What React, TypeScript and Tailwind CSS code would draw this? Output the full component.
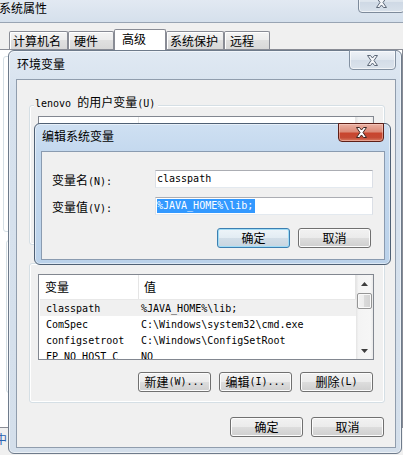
import React from "react";

const CJK = "font-['Noto_Sans_CJK_SC',sans-serif]";

function M({ children, className = "" }: { children: React.ReactNode; className?: string }) {
  return <span className={`font-['DejaVu_Sans_Mono',monospace] text-[10px] ${className}`}>{children}</span>;
}

function XGlyph({ fill, stroke }: { fill: string; stroke: string }) {
  return (
    <svg width="13" height="11" viewBox="0 0 13 11">
      <path
        d="M1.5 0.5 h3 l2 2.5 l2 -2.5 h3 l-3.5 5 l3.5 5 h-3 l-2 -2.5 l-2 2.5 h-3 l3.5 -5 z"
        fill={fill}
        stroke={stroke}
        strokeWidth="1"
        strokeLinejoin="round"
      />
    </svg>
  );
}

function Btn({ children, def = false }: { children: React.ReactNode; def?: boolean }) {
  return (
    <div
      className={`h-[20px] w-[73px] shrink-0 rounded-[3px] border flex items-center justify-center leading-[12px] ${
        def
          ? "border-[#3c7fb1] bg-[linear-gradient(#edf4f9,#e2ecf3_50%,#d2dee8_50%,#c8d5e0)] shadow-[inset_0_0_0_1px_#9fdcf6]"
          : "border-[#707070] bg-[linear-gradient(#f2f2f2,#ebebeb_50%,#dddddd_50%,#cfcfcf)] shadow-[inset_0_0_0_1px_#fcfcfc]"
      }`}
    >
      {children}
    </div>
  );
}

function ScrollBar() {
  return (
    <div className="w-[17px] h-full shrink-0 flex flex-col items-center bg-[linear-gradient(90deg,#e4e4e4,#f4f4f4_15%,#f6f6f6_85%,#e9e9e9)]">
      <div className="h-[17px] w-full flex items-center justify-center">
        <svg width="7" height="4" viewBox="0 0 7 4">
          <path d="M0 4 L3.5 0 L7 4 Z" fill="#3d3d3d" />
        </svg>
      </div>
      <div className="mt-[1px] h-[16px] w-[15px] rounded-[2px] border border-[#959595] bg-[linear-gradient(90deg,#f3f3f3,#ececec_50%,#dadada_50%,#d2d2d2)] shadow-[inset_0_0_0_1px_#fafafa]" />
      <div className="flex-1" />
      <div className="h-[17px] w-full flex items-center justify-center">
        <svg width="7" height="4" viewBox="0 0 7 4">
          <path d="M0 0 L3.5 4 L7 0 Z" fill="#3d3d3d" />
        </svg>
      </div>
    </div>
  );
}

type Row = { name: string; value: string; sel?: boolean };

function ListView({ rows }: { rows: Row[] }) {
  return (
    <div className="h-[86px] w-[336px] shrink-0 border border-[#828790] bg-white flex overflow-hidden">
      <div className="flex-1 flex flex-col pl-[1px] overflow-hidden">
        <div className="h-[25px] shrink-0 flex border-b border-[#e8e8e8]">
          <div className="w-[99px] border-r border-[#e5e5e5] pl-[5px] flex items-center">变量</div>
          <div className="flex-1 border-r border-[#e5e5e5] pl-[5px] flex items-center">值</div>
        </div>
        {rows.map((r) => (
          <div
            key={r.name}
            className={`h-[16px] shrink-0 flex items-center ${r.sel ? "bg-[#f0f0f0]" : ""}`}
          >
            <div className="w-[99px] pl-[6px] overflow-hidden whitespace-nowrap">
              <M>{r.name}</M>
            </div>
            <div className="flex-1 pl-[2px] whitespace-nowrap">
              <M>{r.value}</M>
            </div>
          </div>
        ))}
      </div>
      <ScrollBar />
    </div>
  );
}

function GroupBox({
  label,
  labelTop,
  children,
}: {
  label: React.ReactNode;
  labelTop: string;
  children: React.ReactNode;
}) {
  return (
    <div className="relative h-[140px] w-[356px] shrink-0 rounded-[3px] border border-[#d5dfe5] shadow-[inset_0_0_0_1px_#ffffff] pt-[10px] pl-[8px] flex flex-col">
      <div className={`absolute left-[4px] ${labelTop} bg-[#f0f0f0] pl-[1px] pr-[3px] leading-[12px] whitespace-nowrap`}>
        {label}
      </div>
      {children}
    </div>
  );
}

function Tab({ w, pl, children }: { w: string; pl: string; children: React.ReactNode }) {
  return (
    <div
      className={`${w} ${pl} h-[18px] mb-[1px] pt-[3px] shrink-0 border border-b-0 border-[#898c95] rounded-t-[2px] bg-[linear-gradient(#f4f4f4,#ececec_50%,#e0e0e0_50%,#d8d8d8)] shadow-[inset_1px_1px_0_#ffffff] whitespace-nowrap`}
    >
      {children}
    </div>
  );
}

export default function App() {
  const sysRows: Row[] = [
    { name: "classpath", value: "%JAVA_HOME%\\lib;", sel: true },
    { name: "ComSpec", value: "C:\\Windows\\system32\\cmd.exe" },
    { name: "configsetroot", value: "C:\\Windows\\ConfigSetRoot" },
    { name: "FP_NO_HOST_C", value: "NO" },
  ];
  const userRows: Row[] = [
    { name: "TEMP", value: "%USERPROFILE%\\AppData\\Local\\Temp" },
    { name: "TMP", value: "%USERPROFILE%\\AppData\\Local\\Temp" },
  ];

  return (
    <div className={`relative w-[403px] h-[455px] overflow-hidden bg-[#f0f0f0] text-black text-[12px] leading-[12px] ${CJK}`}>
      {/* 系统属性 background window */}
      <div className="h-[23px] border-b border-[#98a4b3] bg-[linear-gradient(180deg,#e2e9f2,#d5e0ec)] pt-[2px]">
        <span className="block ml-[-1px]">系统属性</span>
      </div>
      <div className="absolute right-[-2px] top-[-8px] w-[47px] h-[21px] rounded-b-[4px] border border-[#7d8a9b] bg-[linear-gradient(180deg,#eef2f7,#dbe3ec_50%,#cfd9e5_50%,#d8e1eb)] shadow-[inset_0_0_0_1px_rgba(255,255,255,0.6)] flex items-center justify-center">
        <XGlyph fill="#f4f6f9" stroke="#5d6878" />
      </div>

      <div className="relative z-10 mt-[6px] mb-[-1px] ml-[9px] flex items-end h-[21px]">
        <Tab w="w-[59px]" pl="pl-[3px]">计算机名</Tab>
        <Tab w="w-[46px]" pl="pl-[5px]">硬件</Tab>
        <div className="w-[52px] h-[21px] shrink-0 pl-[7px] pt-[3px] border border-b-0 border-[#898c95] rounded-t-[2px] bg-white">
          高级
        </div>
        <Tab w="w-[58px]" pl="pl-[3px]">系统保护</Tab>
        <Tab w="w-[46px]" pl="pl-[5px]">远程</Tab>
      </div>

      <div className="ml-[-2px] h-[379px] border border-[#898c95] bg-white flex flex-col">
        <div className="ml-[4px] mt-[6px] h-[176px] w-[380px] rounded-[3px] border border-[#d5dfe5]" />
        <div className="ml-[7px] mt-[8px] h-[153px] w-[380px] rounded-[3px] border border-[#d5dfe5]" />
      </div>
      <div className="mt-[5px] ml-[-5px] text-[#2a62b0]">中</div>

      {/* 环境变量 window */}
      <div className="absolute left-[8px] top-[50px] w-[394px] h-[404px] rounded-[6px] border border-[#6e7b8b] bg-[linear-gradient(180deg,#e0e9f3,#d7e2ee_40px,#d4dfeb)] shadow-[inset_0_0_0_1px_rgba(255,255,255,0.55)] flex flex-col pl-[7px] pr-[5px] pb-[5px]">
        <div className="h-[28px] shrink-0 pt-[7px] pl-[1px]">环境变量</div>
        <div className="absolute right-[5px] top-[-1px] w-[47px] h-[20px] rounded-b-[4px] border border-[#8391a2] bg-[linear-gradient(180deg,#eef2f7,#dfe6ee_50%,#d3dce7_50%,#dbe3ec)] shadow-[inset_0_0_0_1px_rgba(255,255,255,0.6)] flex items-center justify-center">
          <XGlyph fill="#f4f6f9" stroke="#5d6878" />
        </div>
        <div className="h-[369px] shrink-0 border border-[#909dad] bg-[#f0f0f0] flex flex-col pl-[12px] pt-[25px]">
          <GroupBox
            labelTop="top-[-10px]"
            label={
              <>
                <M>lenovo </M>的用户变量<M>(U)</M>
              </>
            }
          >
            <ListView rows={userRows} />
            <div className="mt-[12px] ml-[100px] flex gap-[8px]">
              <Btn>
                新建<M>(N)...</M>
              </Btn>
              <Btn>
                编辑<M>(E)...</M>
              </Btn>
              <Btn>
                删除<M>(D)</M>
              </Btn>
            </div>
          </GroupBox>
          <div className="mt-[18px]">
            <GroupBox
              labelTop="top-[-15px]"
              label={
                <>
                  系统变量<M>(S)</M>
                </>
              }
            >
              <ListView rows={sysRows} />
              <div className="mt-[12px] ml-[100px] flex gap-[8px]">
                <Btn>
                  新建<M>(W)...</M>
                </Btn>
                <Btn>
                  编辑<M>(I)...</M>
                </Btn>
                <Btn>
                  删除<M>(L)</M>
                </Btn>
              </div>
            </GroupBox>
          </div>
          <div className="mt-[14px] ml-[201px] flex gap-[8px]">
            <Btn>确定</Btn>
            <Btn>取消</Btn>
          </div>
        </div>
      </div>

      {/* 编辑系统变量 dialog */}
      <div className="absolute left-[34px] top-[123px] w-[357px] h-[142px] rounded-[6px] border border-[#4f6074] bg-[linear-gradient(180deg,#cfe0f2,#c3d8ee_30px,#bbd2ea)] shadow-[inset_0_0_0_1px_rgba(255,255,255,0.5)] flex flex-col pl-[6px] pr-[5px] pb-[4px]">
        <div className="h-[27px] shrink-0 pt-[6px] pl-[1px]">编辑系统变量</div>
        <div className="absolute right-[6px] top-[-1px] w-[46px] h-[19px] rounded-b-[4px] border border-[#5e1f17] bg-[linear-gradient(180deg,#eab0a2,#dc8b78_45%,#c8452e_55%,#c54a34_80%,#d87c63)] shadow-[inset_0_0_0_1px_rgba(255,220,210,0.45)] flex items-center justify-center">
          <XGlyph fill="#ffffff" stroke="#3f2622" />
        </div>
        <div className="h-[109px] shrink-0 border border-[#8a9bb0] bg-[#f0f0f0] flex flex-col pl-[10px] pt-[18px]">
          <div className="flex items-start h-[18px]">
            <div className="w-[103px] mt-[4px] whitespace-nowrap">
              变量名<M>(N):</M>
            </div>
            <div className="w-[218px] h-[18px] bg-white border border-[#dbdfe6] border-t-[#abadb3] border-b-[#e3e9ef] pl-[1px] flex items-center">
              <M>classpath</M>
            </div>
          </div>
          <div className="mt-[9px] flex items-start h-[18px]">
            <div className="w-[103px] mt-[4px] whitespace-nowrap">
              变量值<M>(V):</M>
            </div>
            <div className="w-[218px] h-[18px] bg-white border border-[#dbdfe6] border-t-[#abadb3] border-b-[#e3e9ef] pl-[1px] flex items-center">
              <M className="inline-block h-[14px] leading-[14px] bg-[#3399ff] text-white pr-[2px]">
                %JAVA_HOME%\lib;
              </M>
            </div>
          </div>
          <div className="mt-[13px] ml-[165px] flex gap-[8px]">
            <Btn def>确定</Btn>
            <Btn>取消</Btn>
          </div>
        </div>
      </div>
    </div>
  );
}
